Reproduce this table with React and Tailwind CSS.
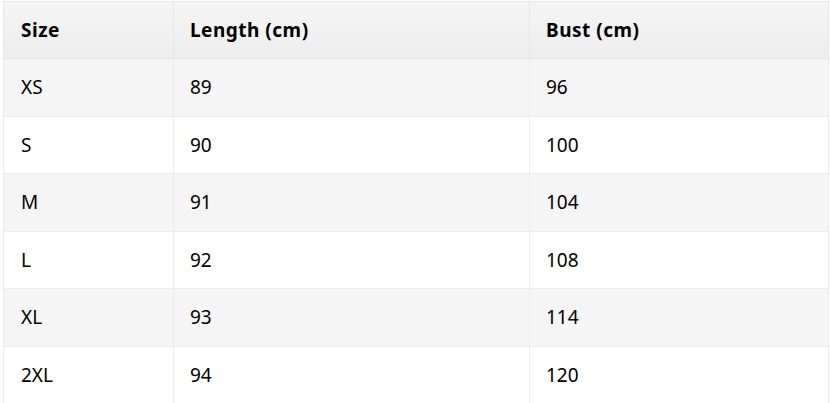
import React from 'react';

const rows = [
  ['XS', '89', '96'],
  ['S', '90', '100'],
  ['M', '91', '104'],
  ['L', '92', '108'],
  ['XL', '93', '114'],
  ['2XL', '94', '120'],
];

const App = () => {
  return (
    <div className="bg-white pl-[3px] pt-[1px] font-['Noto_Sans','Open_Sans',sans-serif] text-black">
      <table className="w-[825px] table-fixed border-collapse text-left text-[19px]">
        <colgroup>
          <col className="w-[170px]" />
          <col className="w-[356px]" />
          <col className="w-[299px]" />
        </colgroup>
        <thead>
          <tr className="h-[57px] bg-gradient-to-b from-[#f5f5f5] to-[#ededed]">
            <th className="border border-[#e6e6e6] px-[17px] font-bold tracking-[0.5px]">Size</th>
            <th className="border border-[#e6e6e6] px-[16px] font-bold tracking-[0.5px]">Length (cm)</th>
            <th className="border border-[#e6e6e6] px-[16px] font-bold tracking-[0.5px]">Bust (cm)</th>
          </tr>
        </thead>
        <tbody>
          {rows.map((r, i) => (
            <tr key={r[0]} className={`h-[57.5px] ${i % 2 === 0 ? 'bg-[#f5f5f5]' : 'bg-white'}`}>
              <td className="border border-[#ececec] px-[17px]">{r[0]}</td>
              <td className="border border-[#ececec] px-[16px]">{r[1]}</td>
              <td className="border border-[#ececec] px-[16px]">{r[2]}</td>
            </tr>
          ))}
        </tbody>
      </table>
    </div>
  );
};

export default App;
